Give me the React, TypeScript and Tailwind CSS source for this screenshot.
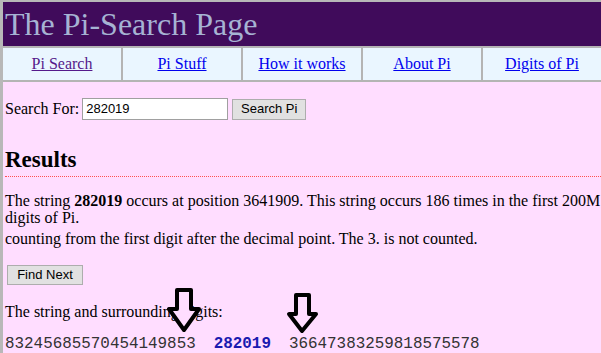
import React from "react";

export default function App() {
  const serif = { fontFamily: '"Liberation Serif", "Times New Roman", serif' };
  const sans = { fontFamily: '"Liberation Sans", Arial, sans-serif' };
  const navItems = ["Pi Search", "Pi Stuff", "How it works", "About Pi", "Digits of Pi"];
  return (
    <div
      className="relative w-[601px] h-[353px] overflow-hidden bg-[#ffddff] border-t-2 border-l-[3px] border-[#b8b8b8] text-black"
      style={serif}
    >
      <div className="h-[44px] bg-[#400b5b] text-[#a6b3d3] text-[32px] leading-[44px] pl-[2px]">
        The Pi-Search Page
      </div>
      <div className="flex h-[36px] bg-[#eaf6ff] border-y-2 border-[#b4b4b4]">
        {navItems.map((t, i) => (
          <div
            key={t}
            className={`flex-1 flex items-center justify-center text-[16px] ${i > 0 ? "border-l-2 border-[#b4b4b4]" : ""}`}
          >
            <span className={`underline ${i === 0 ? "text-[#551a8b]" : "text-[#0000ee]"}`}>{t}</span>
          </div>
        ))}
      </div>
      <div className="pl-[2px]">
        <div className="flex items-center mt-[16px] h-[22px] text-[16px]">
          <span>Search For:</span>
          <div className="ml-[3px] w-[146px] h-[22px] border border-[#a0a0a0] bg-white flex items-center px-[3px] text-[13px]" style={sans}>
            282019
          </div>
          <div className="ml-[4px] w-[74px] h-[21px] border border-[#adadad] bg-[#e1e1e1] flex items-center justify-center text-[13px]" style={sans}>
            Search Pi
          </div>
        </div>
        <div className="mt-[26px] text-[23px] font-bold leading-[27px] pb-[3px] border-b border-dotted border-[#ff5050]">
          Results
        </div>
        <div className="mt-[15px] text-[16px] leading-[17px]">
          The string <b>282019</b> occurs at position 3641909. This string occurs 186 times in the first 200M digits of Pi.
        </div>
        <div className="mt-[4px] text-[16px] leading-[17px]">
          counting from the first digit after the decimal point. The 3. is not counted.
        </div>
        <div className="mt-[18px] ml-[2px] w-[76px] h-[20px] border border-[#adadad] bg-[#e1e1e1] flex items-center justify-center text-[13px]" style={sans}>
          Find Next
        </div>
        <div className="mt-[18px] text-[16px] leading-[17px]">The string and surrounding digits:</div>
        <div className="mt-[15px] flex text-[15.9px] leading-[18px] whitespace-pre text-[#333]" style={{ fontFamily: '"Liberation Mono", "Courier New", monospace' }}>
          <span>83245685570454149853</span>
          <span className="ml-[18px] font-bold text-[#1a1ab0]">282019</span>
          <span className="ml-[18px]">36647383259818575578</span>
        </div>
      </div>
      <svg className="absolute left-[-3px] top-[-2px] pointer-events-none" width="601" height="353">
        <polygon
          points="177,290 191,290 191,309 199,309 184,330 169,309 177,309"
          fill="#ffddff"
          stroke="#000"
          strokeWidth="4"
          strokeLinejoin="round"
        />
        <polygon
          points="296,295 309,295 309,314 316,314 302,331 289,314 296,314"
          fill="#ffddff"
          stroke="#000"
          strokeWidth="4"
          strokeLinejoin="round"
        />
      </svg>
    </div>
  );
}
